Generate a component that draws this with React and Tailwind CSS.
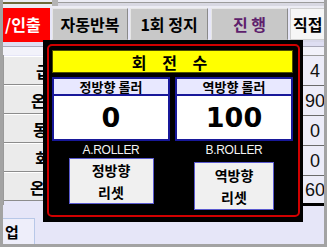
const KR = "font-['Noto_Sans_CJK_KR','Noto_Sans_CJK_SC',sans-serif]";

function LeftCell({ children, pad }) {
  return (
    <div className={`flex h-[29px] shrink-0 items-center overflow-hidden whitespace-nowrap border-t border-b border-t-white border-b-[#8c8c8c] bg-[#ebebeb] ${pad} ${KR} text-[16px] font-bold leading-none text-black`}>
      {children}
    </div>
  );
}

function RightCell({ children, last }) {
  return (
    <div className={`flex h-[30px] shrink-0 items-center overflow-hidden ${last ? "border-b-[3px] border-b-black" : "border-b border-b-[#6a6a6a]"} bg-[#ececf8] font-['Liberation_Sans',sans-serif] text-[18px] leading-none text-[#111]`}>
      <div className="w-[24px] shrink-0 text-center whitespace-nowrap">{children}</div>
    </div>
  );
}

function Column({ title, value, label, btn, btnClass }) {
  return (
    <div className="flex flex-col items-center">
      <div className="w-full border-2 border-[#18189a]">
        <div className={`flex h-[17px] items-center justify-center border-b-2 border-[#18189a] bg-[#e8e8ff] ${KR} text-[13px] font-bold leading-none text-black`}>
          {title}
        </div>
        <div className="flex h-[43px] items-center justify-center bg-white font-['DejaVu_Sans',sans-serif] text-[27px] font-bold leading-none text-black">
          {value}
        </div>
      </div>
      <div className="flex h-[17px] items-center justify-center font-['Liberation_Sans',sans-serif] text-[12px] leading-none tracking-[-0.3px] text-[#f4f4f4]">
        {label}
      </div>
      <div className={`flex flex-col items-center justify-center border border-[#5a5ad0] bg-[#f0f0f0] ${KR} text-[14px] font-bold leading-[22px] text-black ${btnClass}`}>
        <span>{btn}</span>
        <span>리셋</span>
      </div>
    </div>
  );
}

export default function App() {
  return (
    <div className="relative h-[247px] w-[327px] overflow-hidden bg-[#a3a3a3] px-[3px] pb-[3px]">
      <div className="flex h-full flex-col overflow-hidden bg-[#e6e6f8]">
        {/* top strip */}
        <div className="flex h-[8px] shrink-0 items-start bg-[#ececf4]">
          <div className="mt-[2px] h-[2px] w-[49px] bg-[#6e6a3c]" />
          <div className="h-[6px] w-[6px] bg-[#b4b4b4]" />
          <div className="mt-[2px] h-[4px] flex-1 border-t border-[#9c9c9c] bg-[#d8d8e2]" />
        </div>
        {/* tabs */}
        <div className={`flex h-[32px] shrink-0 gap-[2px] ${KR} text-[16px] font-bold leading-none`}>
          <div className="flex w-[47px] shrink-0 items-center overflow-hidden whitespace-nowrap bg-[#ff0000] pl-[2px] text-white">
            /인출
          </div>
          <div className="flex w-[76px] shrink-0 items-center justify-center border border-t-[#e6e6e6] border-l-[#e6e6e6] border-r-[#8a8a8a] border-b-[#c8c8c8] bg-[#c8c8c8] text-black">
            자동반복
          </div>
          <div className="flex w-[78px] shrink-0 items-center justify-center border border-t-[#e6e6e6] border-l-[#e6e6e6] border-r-[#8a8a8a] border-b-[#c8c8c8] bg-[#c8c8c8] text-black">
            1회 정지
          </div>
          <div className="ml-[1px] flex w-[77px] shrink-0 items-center justify-center border border-t-[#e6e6e6] border-l-[#e6e6e6] border-r-[#8a8a8a] border-b-[#c8c8c8] bg-[#c8c8c8] text-[#5e1f6c]">
            진 행
          </div>
          <div className="flex flex-1 items-center overflow-hidden whitespace-nowrap border border-r-0 border-[#d0d0d0] bg-[#f6f6f6] pl-[2px] text-black">
            직접
          </div>
        </div>
        {/* under tabs */}
        <div className="flex h-[2px] shrink-0">
          <div className="w-[47px] bg-[#ff0000]" />
          <div className="flex-1 bg-[#d8d8ea]" />
        </div>
        <div className="flex h-[13px] shrink-0 flex-col">
          <div className="h-[4px] bg-[#dedef2]" />
          <div className="h-px bg-[#a8a8b8]" />
          <div className="flex-1 bg-[#f2f2fa]" />
        </div>
        {/* main */}
        <div className="flex h-[150px] shrink-0">
          <div className="flex w-[88px] shrink-0 flex-col border-l border-[#9a9a9a] pt-[1px]">
            <LeftCell pad="pl-[32px]">급속</LeftCell>
            <LeftCell pad="pl-[27px]">온도</LeftCell>
            <LeftCell pad="pl-[29px]">동작</LeftCell>
            <LeftCell pad="pl-[31px]">회전</LeftCell>
            <LeftCell pad="pl-[26px]">온도</LeftCell>
          </div>
          <div className="flex-1" />
          <div className="flex w-[21px] shrink-0 flex-col border-t border-[#9a9a9a]">
            <RightCell>4</RightCell>
            <RightCell>90</RightCell>
            <RightCell>0</RightCell>
            <RightCell>0</RightCell>
            <RightCell last>60</RightCell>
          </div>
        </div>
        {/* bottom */}
        <div className="flex flex-1 flex-col pt-[13px]">
          <div className={`flex h-[26px] w-[32px] items-center border-t border-r border-[#b8c8e8] bg-[#eeeefa] pl-[2px] ${KR} text-[15px] font-bold leading-none text-black`}>
            업
          </div>
        </div>
      </div>

      {/* popup */}
      <div className="absolute left-[43px] top-[40px] flex h-[182px] w-[260px] flex-col bg-black pb-[5px] pl-[4px] pr-[3px] pt-[4px]">
        <div className="flex flex-1 flex-col rounded-[5px] border-2 border-[#d00000] pb-[2px] pl-[3px] pr-[5px] pt-[4px]">
          <div className={`flex h-[23px] shrink-0 items-center justify-center border border-[#505000] bg-[#ffff00] ${KR} text-[16px] font-bold leading-none tracking-[6px] text-black`}>
            회 전 수
          </div>
          <div className="mt-[4px] grid grid-cols-2 gap-[5px]">
            <Column title="정방향 롤러" value="0" label="A.ROLLER" btn="정방향" btnClass="h-[46px] w-[85px]" />
            <Column title="역방향 롤러" value="100" label="B.ROLLER" btn="역방향" btnClass="mt-[4px] h-[48px] w-[80px]" />
          </div>
        </div>
      </div>
    </div>
  );
}
